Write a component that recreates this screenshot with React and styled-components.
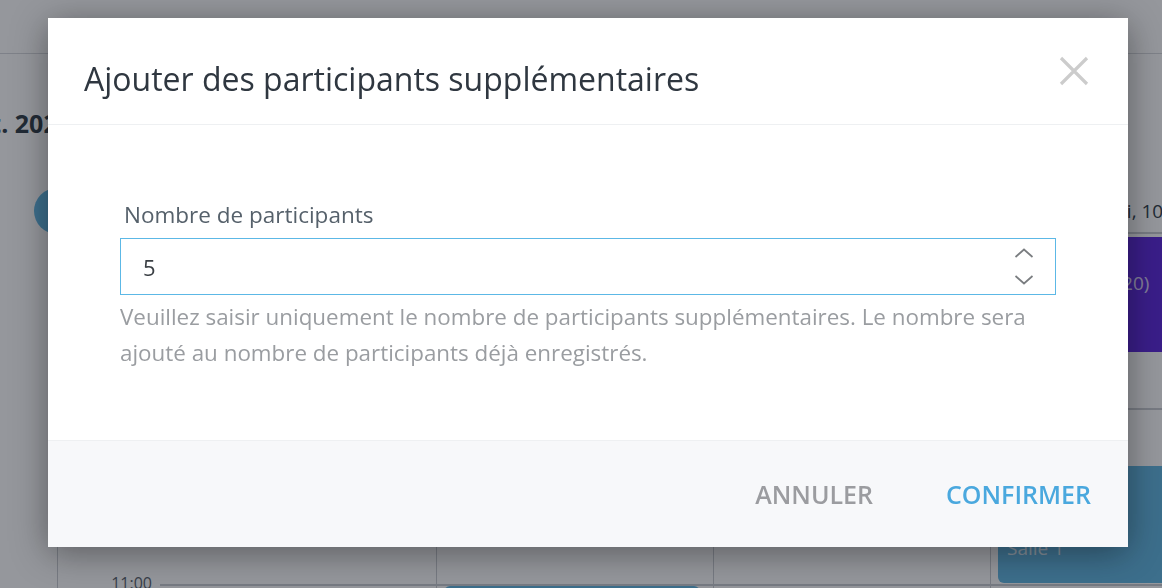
import React from "react";
import styled, { createGlobalStyle } from "styled-components";

const GlobalStyle = createGlobalStyle`
  html, body {
    margin: 0;
    padding: 0;
    width: 100%;
    height: 100%;
    overflow: hidden;
  }
  body {
    font-family: "Open Sans", "Liberation Sans", sans-serif;
    background: #fff;
  }
`;

const HOUR = 352;

/* ---------- calendar behind the dialog ---------- */

const Page = styled.div`
  width: 1162px;
  height: 588px;
  overflow: hidden;
  background: #fff;
`;

const TopBar = styled.div`
  height: 53px;
  border-bottom: 1px solid #d6d8dc;
  background: #fff;
`;

const Heading = styled.div`
  height: 86px;
  display: flex;
  align-items: flex-end;
`;

const PeriodTitle = styled.h1`
  margin: 0 0 0 -38px;
  font-size: 25px;
  line-height: 34px;
  font-weight: 700;
  color: #2d3a45;
`;

const DaysRow = styled.div`
  display: grid;
  grid-template-columns: 160px repeat(4, 277px);
  height: 92px;
  box-sizing: border-box;
  padding-top: 48px;
  align-items: center;
`;

const Avatar = styled.div`
  width: 46px;
  height: 46px;
  border-radius: 50%;
  margin-left: 34px;
  background: #5fb6e2;
`;

const DayLabel = styled.div`
  font-size: 19px;
  color: #2d3a45;
  padding-left: 91px;
  white-space: nowrap;
`;

const Grid = styled.div`
  display: grid;
  grid-template-columns: 58px 102px repeat(4, 277px);
  height: ${HOUR * 2}px;
`;

const Margin = styled.div`
  border-right: 1px solid #c9ccd1;
`;

const TimeColumn = styled.div`
  display: flex;
  flex-direction: column;
`;

const TimeSlot = styled.div`
  height: ${HOUR}px;
  position: relative;
`;

const TimeText = styled.span`
  position: absolute;
  right: 8px;
  top: -12px;
  font-size: 16px;
  color: #56606a;
`;

const DayColumn = styled.div`
  position: relative;
  border-right: 1px solid #c9ccd1;
  background: repeating-linear-gradient(
    to bottom,
    #c9ccd1 0 2px,
    transparent 2px ${HOUR / 2}px
  );
`;

const Event = styled.div`
  position: absolute;
  left: 7px;
  right: 13px;
  border-radius: 6px;
  padding: ${(p) => p.$pad};
  box-sizing: border-box;
  font-size: 19px;
  line-height: 24px;
  white-space: nowrap;
  color: rgba(255, 255, 255, 0.8);
  background: ${(p) => p.$color};
`;

const events = {
  1: [
    {
      top: 354,
      height: 140,
      color: "#5fb6e2",
      pad: "10px 12px",
      lines: ["Réunion"],
    },
  ],
  3: [
    {
      top: 5,
      height: 115,
      color: "#5a23dd",
      pad: "10px 12px 10px 33px",
      lines: ["Yoga", "Cours (12/20)"],
    },
    {
      top: 234,
      height: 117,
      color: "#5fb6e2",
      pad: "22px 12px 0 9px",
      lines: ["Visite", "10:40", "Salle 1"],
    },
  ],
};

function Calendar() {
  return (
    <Page>
      <TopBar />
      <Heading>
        <PeriodTitle>oct. 2020</PeriodTitle>
      </Heading>
      <DaysRow>
        <Avatar />
        <DayLabel>Jeudi, 7</DayLabel>
        <DayLabel>Vendredi, 8</DayLabel>
        <DayLabel>Samedi, 9</DayLabel>
        <DayLabel>Lundi, 10 oct.</DayLabel>
      </DaysRow>
      <Grid>
        <Margin />
        <TimeColumn>
          <TimeSlot>
            <TimeText>10:00</TimeText>
          </TimeSlot>
          <TimeSlot>
            <TimeText>11:00</TimeText>
          </TimeSlot>
        </TimeColumn>
        {[0, 1, 2, 3].map((d) => (
          <DayColumn key={d}>
            {(events[d] || []).map((e, i) => (
              <Event
                key={i}
                $color={e.color}
                $pad={e.pad}
                style={{ top: e.top, height: e.height }}
              >
                {e.lines.map((l) => (
                  <div key={l}>{l}</div>
                ))}
              </Event>
            ))}
          </DayColumn>
        ))}
      </Grid>
    </Page>
  );
}

/* ---------- dialog ---------- */

const Backdrop = styled.div`
  position: fixed;
  inset: 0;
  background: rgba(20, 25, 35, 0.45);
  display: flex;
  align-items: flex-start;
  padding: 18px 0 0 48px;
`;

const Dialog = styled.div`
  width: 1080px;
  background: #fff;
  box-shadow: 0 6px 34px rgba(0, 0, 0, 0.4);
  display: flex;
  flex-direction: column;
`;

const DialogHeader = styled.div`
  height: 107px;
  box-sizing: border-box;
  border-bottom: 1px solid #eef0f2;
  display: flex;
  align-items: flex-start;
  justify-content: space-between;
  padding: 0 38px 0 36px;
`;

const Title = styled.h2`
  margin: 41px 0 0;
  font-size: 32px;
  line-height: 40px;
  font-weight: 400;
  color: #2f3740;
`;

const CloseButton = styled.button`
  border: 0;
  background: none;
  padding: 0;
  margin-top: 38px;
  width: 32px;
  height: 30px;
  display: flex;
  align-items: center;
  justify-content: center;
  cursor: pointer;
`;

const DialogBody = styled.div`
  height: 315px;
  box-sizing: border-box;
  padding: 76px 72px 0;
`;

const Label = styled.label`
  display: block;
  font-size: 22.5px;
  line-height: 28px;
  color: #56616b;
  padding-left: 4px;
  margin-bottom: 9px;
`;

const InputBox = styled.div`
  height: 57px;
  box-sizing: border-box;
  border: 1px solid #5cb8e6;
  display: flex;
  align-items: center;
  padding: 0 21px 0 22px;
`;

const NumberInput = styled.input`
  flex: 1;
  border: 0;
  outline: none;
  font-family: inherit;
  font-size: 22px;
  color: #3a3f44;
  background: transparent;
  padding: 0;
`;

const Spinner = styled.div`
  display: flex;
  flex-direction: column;
  gap: 17px;
`;

const Help = styled.p`
  margin: 4px 0 0;
  font-size: 22.4px;
  line-height: 36px;
  color: #9a9da1;
`;

const DialogFooter = styled.div`
  height: 107px;
  box-sizing: border-box;
  border-top: 1px solid #eef0f2;
  background: #f7f8fa;
  display: flex;
  align-items: center;
  justify-content: flex-end;
  gap: 73px;
  padding: 0 37px 0 0;
`;

const TextButton = styled.button`
  border: 0;
  background: none;
  padding: 0;
  font-family: inherit;
  font-size: 25px;
  font-weight: 600;
  text-transform: uppercase;
  cursor: pointer;
  color: ${(p) => (p.$primary ? "#4aa8de" : "#9b9ca0")};
`;

const Chevron = ({ up }) => (
  <svg width="20" height="10" viewBox="0 0 20 10" fill="none">
    <path
      d={up ? "M1.5 9L10 1.5l8.5 7.5" : "M1.5 1L10 8.5 18.5 1"}
      stroke="#7a7d80"
      strokeWidth="1.7"
    />
  </svg>
);

export default function App() {
  return (
    <>
      <GlobalStyle />
      <Calendar />
      <Backdrop>
        <Dialog>
          <DialogHeader>
            <Title>Ajouter des participants supplémentaires</Title>
            <CloseButton aria-label="Fermer">
              <svg width="30" height="30" viewBox="0 0 30 30">
                <path
                  d="M2 2l26 26M28 2L2 28"
                  stroke="#cccccc"
                  strokeWidth="3.2"
                />
              </svg>
            </CloseButton>
          </DialogHeader>
          <DialogBody>
            <Label htmlFor="count">Nombre de participants</Label>
            <InputBox>
              <NumberInput id="count" defaultValue="5" />
              <Spinner>
                <Chevron up />
                <Chevron />
              </Spinner>
            </InputBox>
            <Help>
              Veuillez saisir uniquement le nombre de participants
              supplémentaires. Le nombre sera ajouté au nombre de participants
              déjà enregistrés.
            </Help>
          </DialogBody>
          <DialogFooter>
            <TextButton>Annuler</TextButton>
            <TextButton $primary>Confirmer</TextButton>
          </DialogFooter>
        </Dialog>
      </Backdrop>
    </>
  );
}
